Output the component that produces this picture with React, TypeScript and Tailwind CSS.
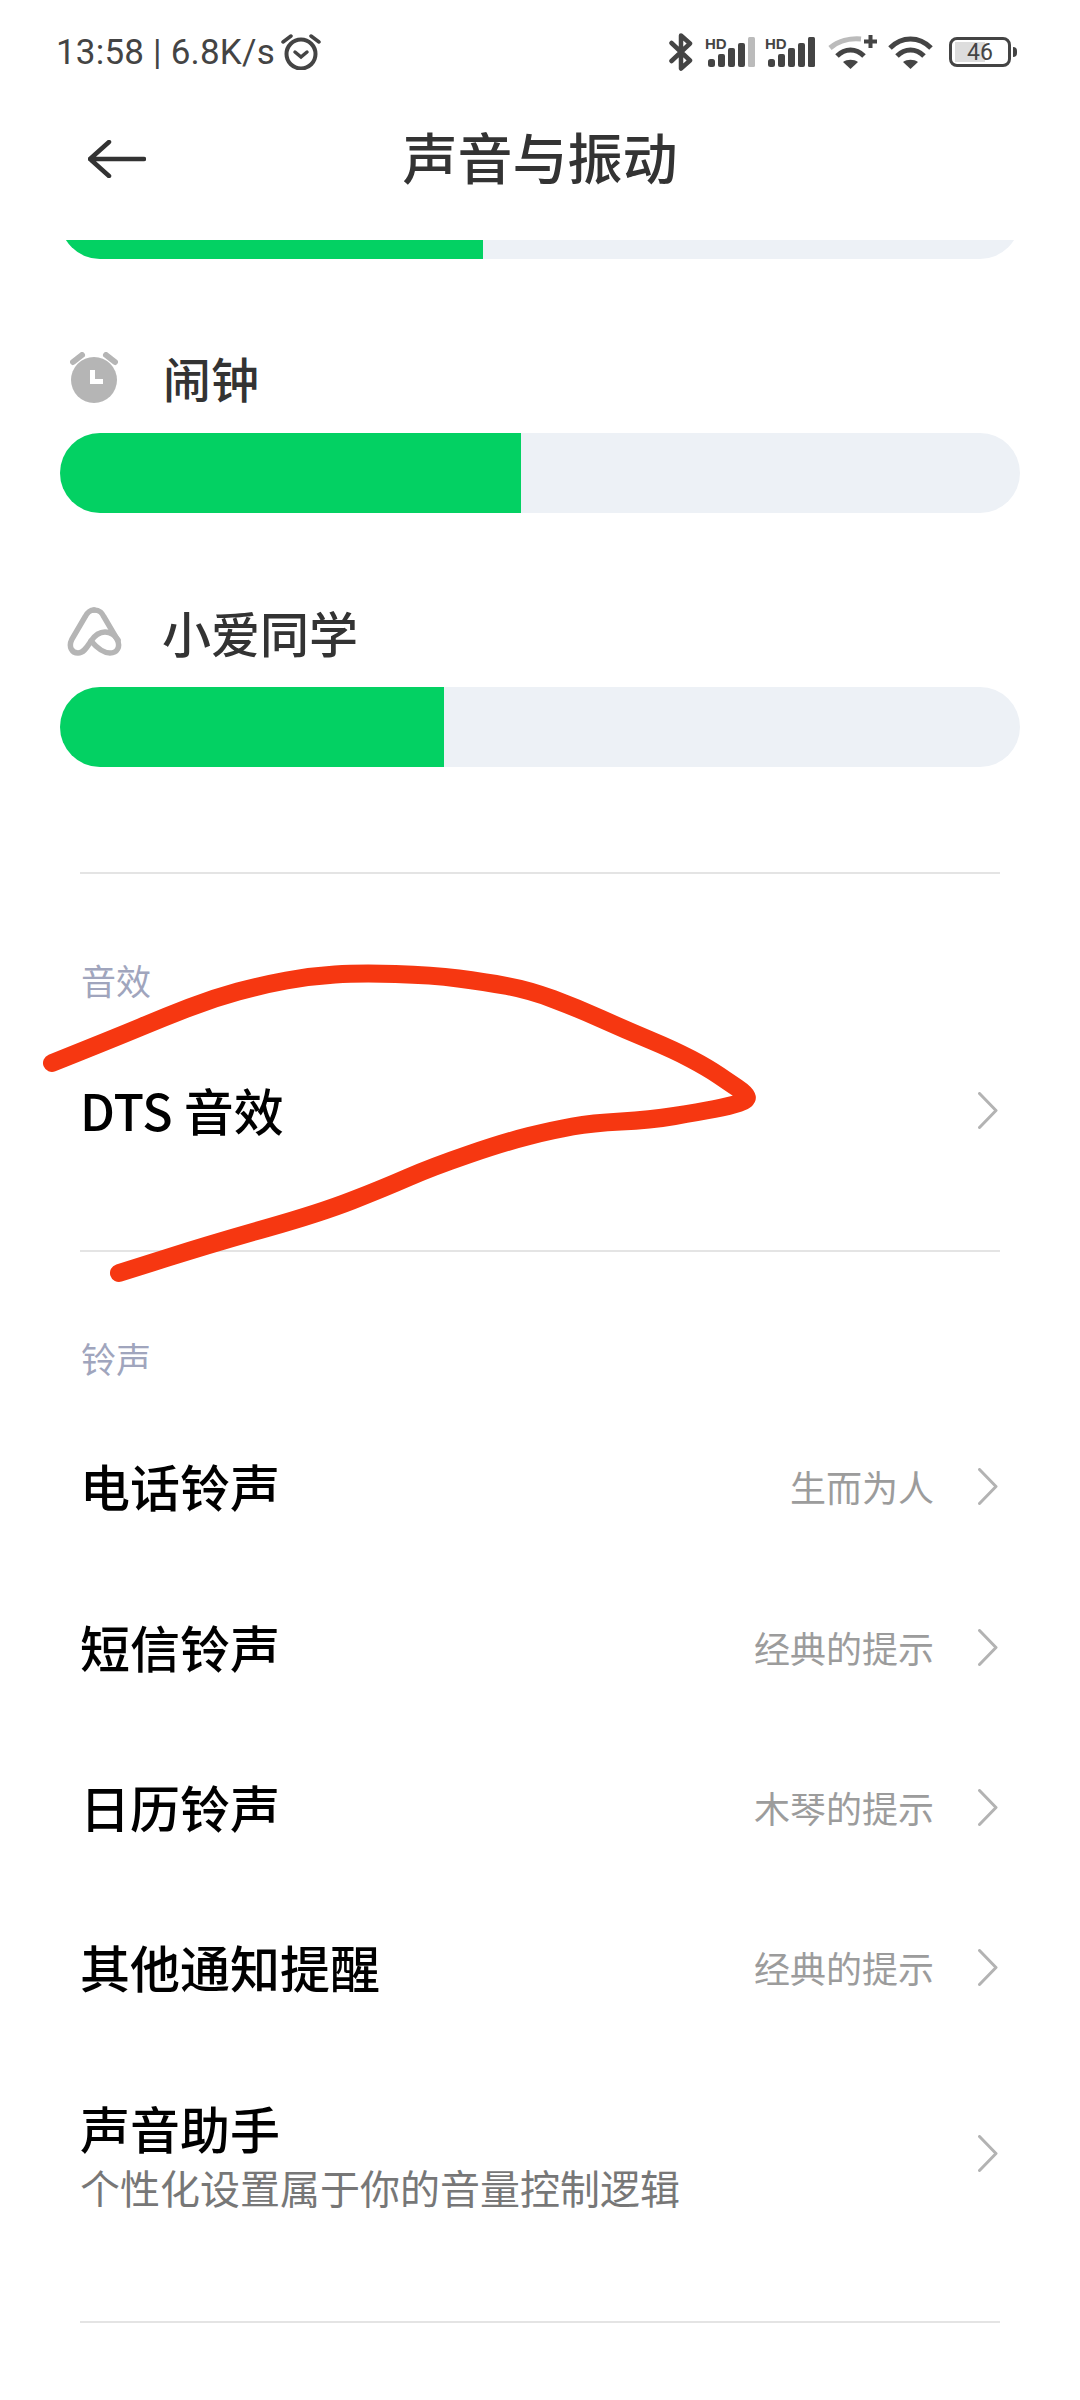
const SANS = 'font-["Noto_Sans_CJK_SC","Noto_Sans",sans-serif]';

// centre line of the hand-drawn red mark, smoothed with quadratic midpoints
const SCRIBBLE: [number, number][] = [
    [52, 1063], [117, 1037], [165, 1017], [214, 998], [262, 985], [311, 976], [359, 973], [432, 975],
    [485, 982], [529, 990], [577, 1008], [626, 1030], [674, 1050], [708, 1068], [730, 1083], [745, 1093], [748, 1100],
    [730, 1106], [699, 1112], [650, 1120], [592, 1123], [553, 1130], [505, 1142], [432, 1167], [384, 1188], [320, 1213],
    [214, 1243], [119, 1273],
];

function scribblePath() {
    let d = `M${SCRIBBLE[0][0]} ${SCRIBBLE[0][1]}`;
    for (let i = 1; i < SCRIBBLE.length - 1; i++) {
        const [x, y] = SCRIBBLE[i];
        const [nx, ny] = SCRIBBLE[i + 1];
        d += `Q${x} ${y} ${(x + nx) / 2} ${(y + ny) / 2}`;
    }
    const last = SCRIBBLE[SCRIBBLE.length - 1];
    return `${d}L${last[0]} ${last[1]}`;
}

function Signal({ dimLast }: { dimLast?: boolean }) {
    return (
        <svg width="50" height="32" viewBox="0 0 50 32" fill="#444">
            <text x="0" y="13" fontSize="15" fontWeight="700" fontFamily="Liberation Sans">HD</text>
            <rect x="3" y="23" width="7" height="8" rx="2.5" />
            <rect x="13" y="18" width="7" height="13" rx="2" />
            <rect x="23" y="12" width="7" height="19" rx="2" />
            <rect x="33" y="7" width="7" height="24" rx="2" />
            <rect x="43" y="1" width="7" height="30" rx="1.5" fill={dimLast ? '#bbb' : '#444'} />
        </svg>
    );
}

function Wifi({ plus }: { plus?: boolean }) {
    return (
        <svg width={plus ? 49 : 45} height="34" viewBox={plus ? '0 0 49 34' : '0 0 45 34'} fill="none" strokeWidth="5">
            {plus ? (
                <path d="M2 13C10 6 22 3 33 4" stroke="#bbb" />
            ) : (
                <path d="M2 13C14 1 31 1 43 13" stroke="#444" />
            )}
            <path d="M9 21C17 13 28 13 36 21" stroke="#444" />
            <path d="M22.5 34L15 27c4-3 11-3 15 0z" fill="#444" />
            {plus && <path d="M36 6.5h13M42.5 0v13" stroke="#444" strokeWidth="4" />}
        </svg>
    );
}

function Chevron() {
    return (
        <svg className="mb-[2px]" width="20" height="37" viewBox="0 0 20 37" fill="none" stroke="#b3b3b3" strokeWidth="3">
            <path d="M1.5 1.5L18 18.5L1.5 35.5" strokeLinecap="round" strokeLinejoin="round" />
        </svg>
    );
}

function StatusBar() {
    return (
        <div className="h-[104px] pl-[56px] pr-[63px] flex items-center justify-between">
            <div className="flex items-center text-[#444] text-[35px] leading-none font-['Roboto',sans-serif] tracking-[0.2px]">
                <span>13:58 | 6.8K/s</span>
                <svg className="ml-[6px]" width="40" height="36" viewBox="0 0 40 36" fill="none" stroke="#444" strokeWidth="4">
                    <circle cx="20" cy="20" r="14.5" />
                    <path d="M14 18l6 5 6-5" strokeWidth="3.5" strokeLinecap="round" />
                    <path d="M2 8l8-6M38 8l-8-6" strokeWidth="3.5" strokeLinecap="round" />
                </svg>
            </div>
            <div className="flex items-center">
                <svg width="24" height="38" viewBox="0 0 24 38" fill="none" stroke="#444" strokeWidth="4.5" strokeLinejoin="round" strokeLinecap="round">
                    <path d="M2.5 10L21 27.5L12 35.5V2.5L21 10.5L2.5 28" />
                </svg>
                <div className="ml-[12px]"><Signal dimLast /></div>
                <div className="ml-[10px]"><Signal /></div>
                <div className="ml-[13px]"><Wifi plus /></div>
                <div className="ml-[11px]"><Wifi /></div>
                <div className="ml-[16px] flex items-center gap-[2px]">
                    <div className="w-[62px] h-[30px] border-[3.5px] border-[#444] rounded-[8px] relative flex items-center justify-center">
                        <div className="absolute left-[3px] top-[2px] bottom-[2px] w-[30px] bg-[#ddd]" />
                        <span className="relative text-[23px] leading-none text-[#444] font-['Roboto',sans-serif]">46</span>
                    </div>
                    <div className="w-[4px] h-[10px] bg-[#444] rounded-r" />
                </div>
            </div>
        </div>
    );
}

function Slider({ pct }: { pct: number }) {
    return (
        <div className="mx-[60px] h-[80px] rounded-[40px] bg-[#edf1f6] overflow-hidden">
            <div className="h-full bg-[#03d163]" style={{ width: `${pct}px` }} />
        </div>
    );
}

function SettingRow({ title, value, className }: { title: string; value?: string; className?: string }) {
    return (
        <div className={`flex items-center pl-[80px] pr-[82px] ${className ?? ''}`}>
            <span className="mb-[5px] text-[50px] font-medium text-black leading-none">{title}</span>
            {value && <span className="ml-auto mr-[44px] mb-[3px] text-[36px] text-[#9c9c9c] leading-none">{value}</span>}
            <div className={value ? '' : 'ml-auto'}><Chevron /></div>
        </div>
    );
}

function SectionLabel({ children, className }: { children: string; className?: string }) {
    return <div className={`h-[40px] flex items-center pb-[4px] pl-[81px] text-[35px] leading-none text-[#a0a5bd] ${className ?? ''}`}>{children}</div>;
}

export default function App() {
    return (
        <div className={`w-[1080px] h-[2400px] bg-white overflow-hidden relative ${SANS}`}>
            <StatusBar />
            {/* title bar */}
            <div className="h-[110px] flex items-center relative">
                <svg className="ml-[88px]" width="58" height="38" viewBox="0 0 58 38" fill="none" stroke="#333" strokeWidth="4.5" strokeLinecap="round" strokeLinejoin="round">
                    <path d="M2 19H56M21 2L2 19L21 36" />
                </svg>
                <span className="absolute left-0 right-0 pb-[8px] text-center text-[55px] font-medium text-[#333] leading-none">声音与振动</span>
            </div>
            {/* slider cut off by the scroll edge */}
            <div className="mt-[26px] h-[19px] overflow-hidden">
                <div className="-mt-[61px]">
                    <Slider pct={423} />
                </div>
            </div>

            <div className="mt-[89px] flex items-center h-[60px] pl-[70px]">
                <svg width="48" height="52" viewBox="0 0 48 52" fill="#b5b5b5">
                    <circle cx="24" cy="28" r="23" />
                    <path d="M3 10L12 3M45 10L36 3" stroke="#b5b5b5" strokeWidth="6" strokeLinecap="round" />
                    <path d="M22.5 18V29.5H33" fill="none" stroke="#fff" strokeWidth="5" />
                </svg>
                <span className="ml-[45px] mb-[2px] text-[48px] font-medium text-[#333] leading-none">闹钟</span>
            </div>
            <div className="mt-[25px]"><Slider pct={461} /></div>

            <div className="mt-[89px] flex items-center h-[60px] pl-[67px]">
                <svg width="55" height="50" viewBox="0 0 55 50" fill="none" stroke="#b5b5b5" strokeWidth="5.5" strokeLinecap="round">
                    <path d="M27 3C22 3 20 6 18 10L5 32C1 40 5 46 11 46C17 46 20 40 24 34C28 28 33 25 38 25C44 25 48 28 51 33" />
                    <path d="M27 3C33 3 35 6 37 10L50 32C54 40 50 46 43 46C36 46 30 41 24 34" />
                </svg>
                <span className="ml-[40px] mb-[2px] text-[49px] font-medium text-[#333] leading-none">小爱同学</span>
            </div>
            <div className="mt-[25px]"><Slider pct={384} /></div>

            <div className="mx-[80px] mt-[105px] border-t-2 border-[#e4e4e4]" />
            <SectionLabel className="mt-[87px]">音效</SectionLabel>
            <SettingRow title="DTS 音效" className="h-[160px] mt-[30px]" />
            <div className="mx-[80px] mt-[59px] border-t-2 border-[#e4e4e4]" />
            <SectionLabel className="mt-[87px]">铃声</SectionLabel>
            <SettingRow title="电话铃声" value="生而为人" className="h-[161px] mt-[28px]" />
            <SettingRow title="短信铃声" value="经典的提示" className="h-[160px]" />
            <SettingRow title="日历铃声" value="木琴的提示" className="h-[160px]" />
            <SettingRow title="其他通知提醒" value="经典的提示" className="h-[160px]" />
            <div className="flex items-center pl-[80px] pr-[82px] mt-[54px]">
                <div className="flex flex-col gap-[15px]">
                    <span className="text-[50px] h-[50px] font-medium text-black leading-none">声音助手</span>
                    <span className="text-[40px] h-[40px] text-[#777] leading-none">个性化设置属于你的音量控制逻辑</span>
                </div>
                <div className="ml-auto"><Chevron /></div>
            </div>
            <div className="mx-[80px] mt-[114px] border-t-2 border-[#e4e4e4]" />

            {/* red mark drawn over the screenshot */}
            <svg className="absolute left-0 top-0 pointer-events-none" width="1080" height="1300" fill="none">
                <path d={scribblePath()} stroke="#f63711" strokeWidth="18" strokeLinecap="round" strokeLinejoin="round" />
            </svg>
        </div>
    );
}
